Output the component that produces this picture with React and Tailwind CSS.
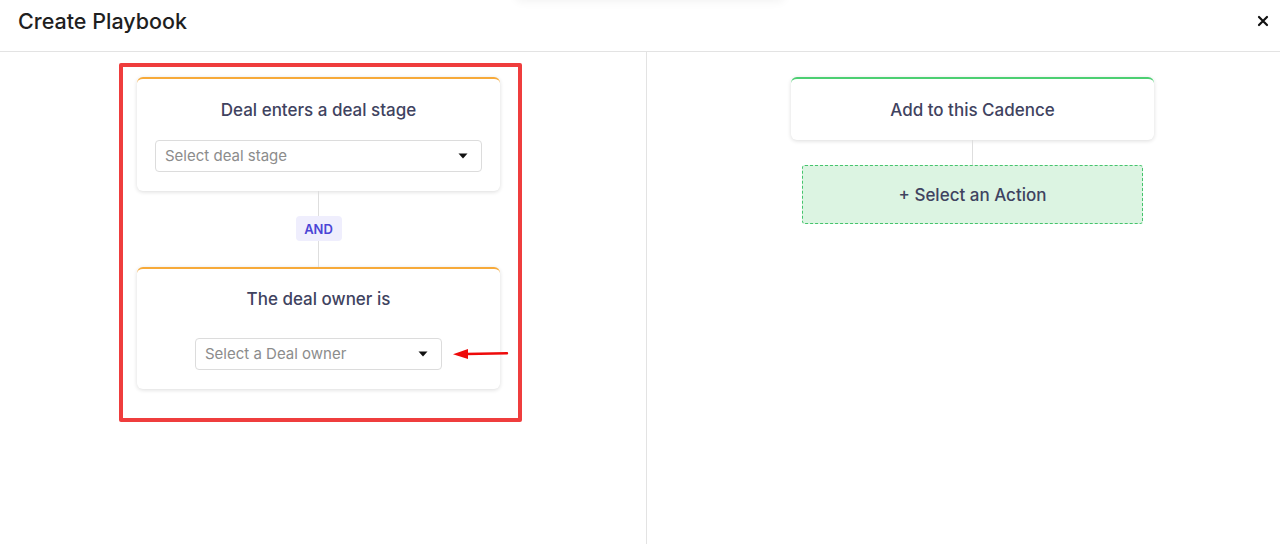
import React from "react";

function Caret() {
  return (
    <svg width="10" height="6" viewBox="0 0 10 6" className="shrink-0">
      <path d="M0.5 0.5 L9.5 0.5 L5 5.5 Z" fill="#111" />
    </svg>
  );
}

function Select({ text, className }) {
  return (
    <div className={`h-[32px] border border-[#dcdcdc] rounded-[4px] bg-white flex items-center justify-between pl-[9px] pr-[13px] ${className}`}>
      <span className="text-[15px] leading-[20px] text-[#8c8c8c]">{text}</span>
      <Caret />
    </div>
  );
}

export default function App() {
  return (
    <div className="w-full h-[544px] bg-white flex flex-col relative overflow-hidden" style={{ fontFamily: "Inter, 'Noto Sans', sans-serif" }}>
      <div className="absolute left-[515px] top-[-14px] w-[270px] h-[14px] rounded-full shadow-[0_2px_10px_rgba(0,0,0,0.05)]" />
      <div className="h-[52px] border-b border-[#e3e3e3] flex items-center justify-between pl-[18px] pr-[10px] shrink-0">
        <h1 className="text-[21.5px] leading-[28px] font-medium text-[#1f1f1f] -mt-[10px]">Create Playbook</h1>
        <svg width="12" height="12" viewBox="0 0 12 12" className="-mt-[10px] mr-[1px]">
          <path d="M2 2 L10 10 M10 2 L2 10" stroke="#111" strokeWidth="2.2" strokeLinecap="round" />
        </svg>
      </div>
      <div className="flex flex-1 min-h-0">
        <div className="w-[647px] border-r border-[#e3e3e3] pt-[11px] pl-[119px]">
          <div className="w-[403px] h-[359px] border-4 border-[#ef3d3d] rounded-[2px] pt-[10px] pl-[14px] relative">
            <div className="w-[363px] bg-white rounded-[6px] border-t-2 border-[#f7aa3a] shadow-[0_1px_4px_rgba(0,0,0,0.14)] pt-[19px] pb-[19px] px-[18px] flex flex-col items-center">
              <div className="text-[17px] leading-[24px] font-medium text-[#3f4360]">Deal enters a deal stage</div>
              <Select text="Select deal stage" className="w-full mt-[18px]" />
            </div>
            <div className="w-[363px] flex flex-col items-center">
              <div className="w-px h-[25px] bg-[#dedede]" />
              <div className="h-[25px] w-[46px] rounded-[4px] bg-[#efeefd] flex items-center justify-center text-[13px] leading-[16px] font-semibold text-[#4b45d6]">AND</div>
              <div className="w-px h-[26px] bg-[#dedede]" />
            </div>
            <div className="w-[363px] bg-white rounded-[6px] border-t-2 border-[#f7aa3a] shadow-[0_1px_4px_rgba(0,0,0,0.14)] pt-[18px] pb-[19px] flex flex-col items-center">
              <div className="text-[17px] leading-[24px] font-medium text-[#3f4360]">The deal owner is</div>
              <Select text="Select a Deal owner" className="w-[247px] mt-[27px]" />
            </div>
            <svg className="absolute left-[329px] top-[281px]" width="58" height="12" viewBox="0 0 58 12">
              <path d="M14 6 L55 5.2" stroke="#ee0a0a" strokeWidth="2.4" strokeLinecap="round" />
              <path d="M1 6.2 L16 1 L16 11 Z" fill="#ee0a0a" />
            </svg>
          </div>
        </div>
        <div className="flex-1 pt-[25px] pl-[144px]">
          <div className="w-[363px] flex flex-col items-center">
            <div className="w-full h-[63px] bg-white rounded-[6px] border-t-2 border-[#4ccf72] shadow-[0_1px_4px_rgba(0,0,0,0.14)] flex items-center justify-center">
              <span className="text-[17px] leading-[24px] font-medium text-[#3f4360]">Add to this Cadence</span>
            </div>
            <div className="w-px h-[25px] bg-[#dedede]" />
            <div className="w-[341px] h-[59px] bg-[#dcf4e2] border border-dashed border-[#45c46c] rounded-[3px] flex items-center justify-center">
              <span className="text-[17px] leading-[24px] font-medium text-[#3f4360]">+ Select an Action</span>
            </div>
          </div>
        </div>
      </div>
    </div>
  );
}
